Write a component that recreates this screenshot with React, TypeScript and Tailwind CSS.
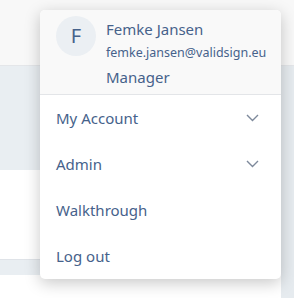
const items = [
  { label: "My Account", sub: true },
  { label: "Admin", sub: true },
  { label: "Walkthrough", sub: false },
  { label: "Log out", sub: false },
];

function Chevron() {
  return (
    <svg width="13" height="8" viewBox="0 0 13 8" fill="none" className="mr-[6px]">
      <path d="M1 1l5.5 5.5L12 1" stroke="#7d899b" strokeWidth="1.4" />
    </svg>
  );
}

export default function App() {
  return (
    <div className="relative flex h-[298px] w-[294px] flex-col overflow-hidden bg-white font-['Noto_Sans',sans-serif]">
      {/* page behind the menu */}
      <div className="h-[66px] shrink-0 border-b border-[#e4e6e9] bg-[#f8f8f8]" />
      <div className="flex flex-1">
        <div className="flex w-[281px] flex-col">
          <div className="h-[104px] bg-[#e9eef2]" />
          <div className="h-[89px] bg-white" />
          <div className="h-[16px] border-t border-[#dfe3e8] bg-[#e9eef2]" />
          <div className="flex-1 bg-white" />
        </div>
        <div className="flex-1 bg-[#e6ebef]" />
      </div>

      {/* user menu */}
      <div className="absolute left-[40px] top-[10px] w-[241px] overflow-hidden rounded-[5px] bg-white shadow-[0_4px_16px_rgba(0,0,0,0.22)]">
        <div className="flex items-start gap-[10px] border-b border-[#e3e5e8] bg-[#f9f9f9] px-4 pb-[5px] pt-[6px]">
          <div className="flex h-[40px] w-[40px] shrink-0 items-center justify-center rounded-full bg-[#ebeff3] text-[20px] text-[#46628b]">
            F
          </div>
          <div className="pt-[1px] text-[#46628b]">
            <div className="text-[15px] leading-[24px]">Femke Jansen</div>
            <div className="text-[12.5px] leading-[24px]">femke.jansen@validsign.eu</div>
            <div className="text-[15px] leading-[24px]">Manager</div>
          </div>
        </div>
        <ul>
          {items.map((item) => (
            <li
              key={item.label}
              className="flex h-[46px] items-center justify-between px-4 text-[15px] text-[#46628b]"
            >
              <span>{item.label}</span>
              {item.sub && <Chevron />}
            </li>
          ))}
        </ul>
      </div>
    </div>
  );
}
